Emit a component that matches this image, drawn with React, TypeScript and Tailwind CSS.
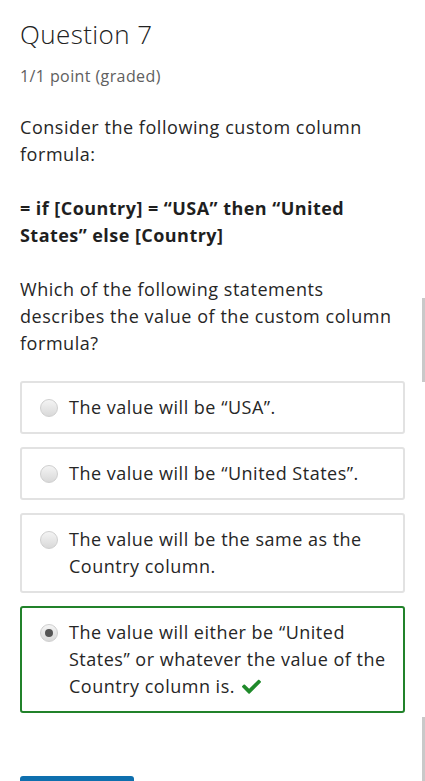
import React from "react";

function Radio({ checked }: { checked?: boolean }) {
  return (
    <span className="mt-[4.5px] flex h-[18px] w-[18px] shrink-0 items-center justify-center rounded-full border border-[#cfcfcf] bg-gradient-to-b from-[#f4f4f4] to-[#d9d9d9]">
      {checked && <span className="h-[8px] w-[8px] rounded-full bg-[#555555]" />}
    </span>
  );
}

function Option({
  children,
  checked,
  correct,
}: {
  children: React.ReactNode;
  checked?: boolean;
  correct?: boolean;
}) {
  return (
    <div
      className={
        correct
          ? "flex gap-[11px] rounded-[3px] border-2 border-[#21822a] bg-white py-[11px] pl-[18px] pr-[10px]"
          : "flex gap-[11px] rounded-[3px] border-2 border-[#e2e2e2] bg-white py-[11px] pl-[18px] pr-[10px]"
      }
    >
      <Radio checked={checked} />
      <div className="text-[18px] leading-[27px] tracking-[0.5px] text-[#262626]">{children}</div>
    </div>
  );
}

export default function App() {
  return (
    <div
      className="relative h-[781px] w-full overflow-hidden bg-white"
      style={{ fontFamily: '"Open Sans", "Noto Sans", sans-serif' }}
    >
      <div className="flex flex-col px-[20px] pt-[17px]">
        <h2 className="text-[26px] font-light leading-[34px] tracking-[0.4px] text-[#222222]">Question 7</h2>
        <div className="mt-[14px] text-[16px] leading-[22px] tracking-[0.4px] text-[#606060]">1/1 point (graded)</div>
        <div className="mt-[26.5px] text-[18px] leading-[27px] tracking-[0.55px] text-[#262626]">
          <p>Consider the following custom column formula:</p>
          <p className="mt-[27px] font-bold tracking-[0.45px] text-[#1f1f1f]">
            = if [Country] = “USA” then “United States” else [Country]
          </p>
          <p className="mt-[27px]">
            Which of the following statements describes the value of the custom column formula?
          </p>
        </div>
        <div className="mt-[24.5px] flex flex-col gap-[13px]">
          <Option>The value will be “USA”.</Option>
          <Option>The value will be “United States”.</Option>
          <Option>The value will be the same as the Country column.</Option>
          <Option checked correct>
            The value will either be “United States” or whatever the value of the Country column is.
            <svg
              viewBox="0 0 512 400"
              className="ml-[7px] inline-block h-[15px] w-[19px] align-[-1px]"
              fill="#1f8a2a"
            >
              <path d="M173.898 439.404l-166.4-166.4c-9.997-9.997-9.997-26.206 0-36.204l36.203-36.204c9.997-9.998 26.207-9.998 36.204 0L192 312.69 432.095 72.596c9.997-9.997 26.207-9.997 36.204 0l36.203 36.204c9.997 9.997 9.997 26.206 0 36.204l-294.4 294.401c-9.998 9.997-26.207 9.997-36.204-.001z" transform="translate(0,-50)" />
            </svg>
          </Option>
        </div>
        <div className="mt-[63px] h-[40px] w-[114px] rounded-[3px] bg-[#0e6fae]" />
      </div>
      <div className="absolute left-[422px] top-[298px] h-[84px] w-[3px] bg-[#c9c9c9]" />
      <div className="absolute left-[422px] top-[717px] h-[64px] w-[3px] bg-[#c9c9c9]" />
    </div>
  );
}
